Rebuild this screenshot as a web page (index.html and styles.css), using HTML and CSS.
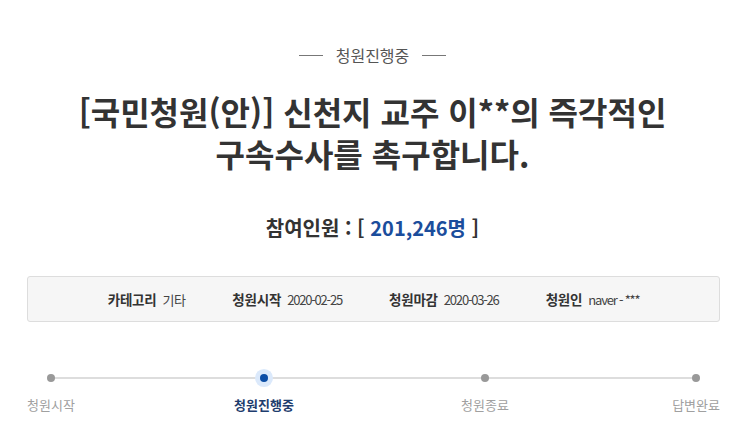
FILE: index.html
```html
<!DOCTYPE html>
<html lang="ko">
<head>
<meta charset="utf-8">
<link rel="stylesheet" href="styles.css">
</head>
<body>
<div class="page">
  <div class="status"><span class="dash"></span><span class="status-text">청원진행중</span><span class="dash"></span></div>
  <h1 class="title">[국민청원(안)] 신천지 교주 이**의 즉각적인<br>구속수사를 촉구합니다.</h1>
  <div class="count">참여인원 : [ <span class="num">201,246명</span> ]</div>
  <div class="info">
    <div class="info-item"><span class="label">카테고리</span><span class="value ko">기타</span></div>
    <div class="info-item"><span class="label">청원시작</span><span class="value">2020-02-25</span></div>
    <div class="info-item"><span class="label">청원마감</span><span class="value">2020-03-26</span></div>
    <div class="info-item"><span class="label">청원인</span><span class="value">naver - ***</span></div>
  </div>
  <div class="progress">
    <div class="step"><span class="dot"></span><span class="step-label">청원시작</span></div>
    <div class="step active"><span class="dot"></span><span class="step-label">청원진행중</span></div>
    <div class="step"><span class="dot"></span><span class="step-label">청원종료</span></div>
    <div class="step"><span class="dot"></span><span class="step-label">답변완료</span></div>
  </div>
</div>
</body>
</html>
```
FILE: styles.css
```css
html, body {
  margin: 0;
  padding: 0;
  background: #ffffff;
}
body {
  font-family: "Noto Sans CJK KR", "Noto Sans", sans-serif;
  color: #333333;
}
.page {
  width: 745px;
  height: 430px;
  overflow: hidden;
}
.status {
  margin-top: 45px;
  height: 20px;
  display: flex;
  justify-content: center;
  align-items: center;
  gap: 13px;
}
.dash {
  width: 24px;
  height: 1px;
  background: #777777;
}
.status-text {
  font-size: 16px;
  line-height: 20px;
  color: #555555;
}
.title {
  margin: 25px 0 0;
  font-size: 32px;
  line-height: 42px;
  font-weight: 700;
  text-align: center;
  color: #333333;
  letter-spacing: 0;
}
.count {
  margin-top: 40px;
  font-size: 20px;
  line-height: 28px;
  font-weight: 700;
  text-align: center;
  color: #333333;
}
.num {
  color: #1b4d9c;
}
.info {
  margin: 34px 25px 0 27px;
  height: 44px;
  border: 1px solid #dddddd;
  border-radius: 3px;
  background: #f6f6f6;
  display: flex;
  justify-content: center;
  align-items: center;
  gap: 47px;
}
.info-item {
  display: flex;
  align-items: center;
  gap: 6px;
}
.label {
  font-size: 13.5px;
  font-weight: 700;
  color: #333333;
  letter-spacing: -0.2px;
}
.value {
  font-size: 13px;
  color: #444444;
  letter-spacing: -1.2px;
}
.value.ko {
  letter-spacing: -0.6px;
}
.progress {
  position: relative;
  margin: 46px 25px 0 27px;
  display: flex;
  justify-content: space-between;
}
.progress::before {
  content: "";
  position: absolute;
  left: 22px;
  right: 22px;
  top: 9px;
  height: 2px;
  background: #dddddd;
}
.step {
  position: relative;
  display: flex;
  flex-direction: column;
  align-items: center;
}
.active {
  left: -4px;
}
.dot {
  width: 8px;
  height: 8px;
  margin: 6px 0;
  border-radius: 50%;
  background: #999999;
}
.active .dot {
  background: #0b4ea6;
  box-shadow: 0 0 0 5px #dbe9fb;
}
.step-label {
  margin-top: 8px;
  font-size: 13px;
  line-height: 18px;
  color: #a0a0a0;
}
.active .step-label {
  font-weight: 700;
  color: #1e3d6e;
}
```
